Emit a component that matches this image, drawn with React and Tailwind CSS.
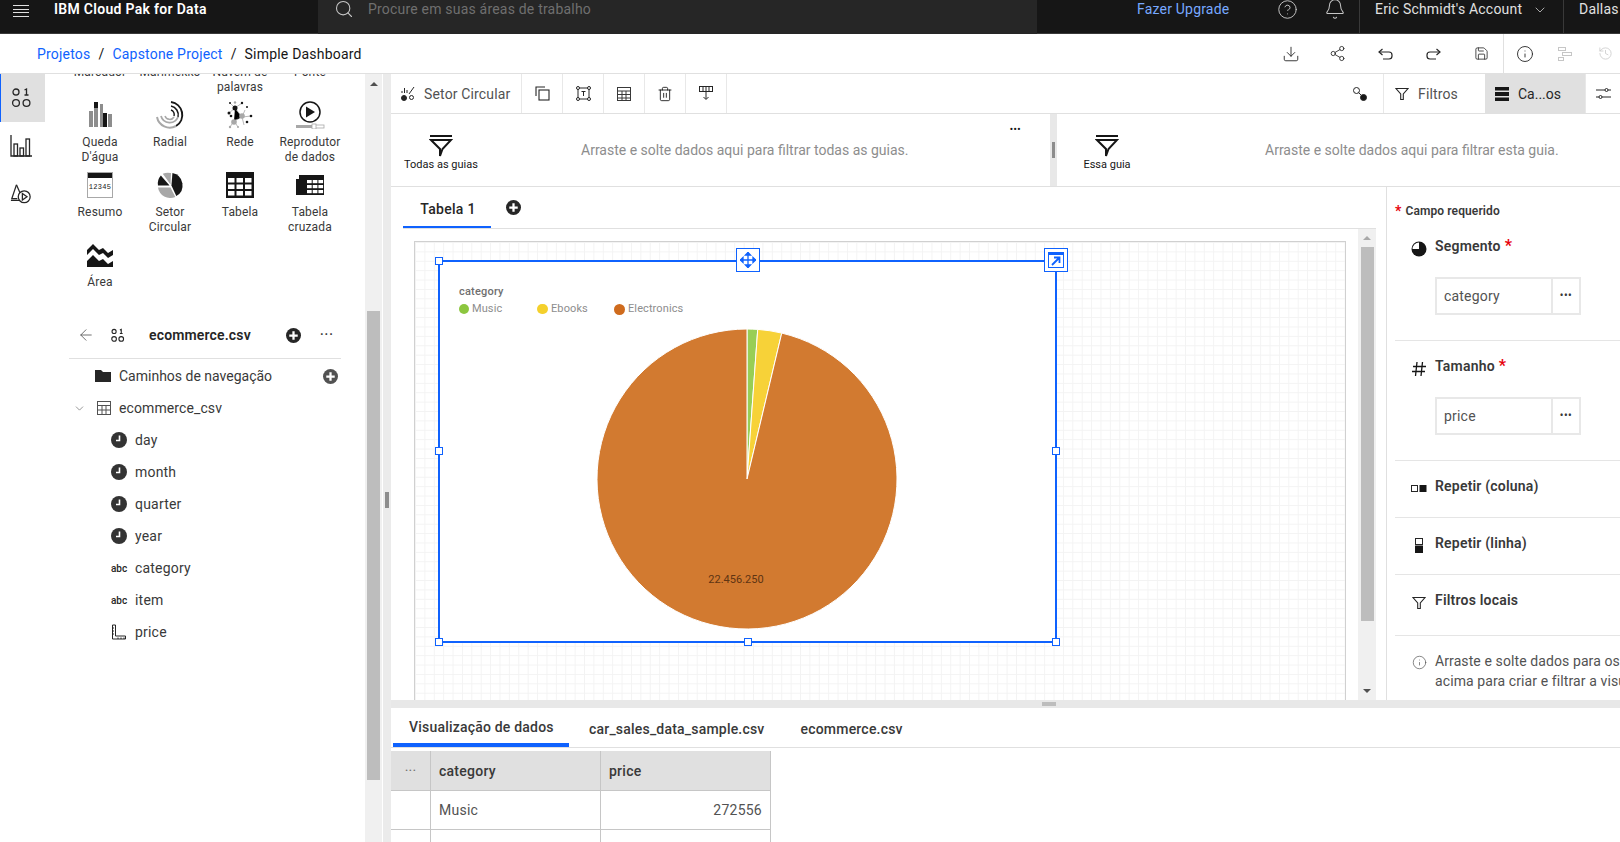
import React from "react";
import { Search, CircleHelp, Bell, ChevronDown, Download, Share2, Save, Info, History, ArrowLeft, Trash2 } from "lucide-react";

const Plus = ({ c = "#262626", s = 15 }) => (
  <svg width={s} height={s} viewBox="0 0 16 16"><circle cx="8" cy="8" r="8" fill={c} /><path d="M8 3.500v9M3.500 8h9" stroke="#fff" strokeWidth="2.400" /></svg>
);
const Clock = () => (
  <svg width="16" height="16" viewBox="0 0 16 16"><circle cx="8" cy="8" r="8" fill="#333" /><path d="M8.500 3.500v5h-3.500" fill="none" stroke="#fff" strokeWidth="1.600" /></svg>
);
const Grid01 = ({ s = 22, w = 1.3 }) => (
  <svg width={s} height={s} viewBox="0 0 22 22" fill="none" stroke="#262626" strokeWidth={w}>
    <circle cx="6" cy="5" r="3" /><circle cx="6" cy="16" r="3.400" /><circle cx="16.500" cy="16" r="3.400" /><path d="M14.500 3l2-1v6M14.500 8h4" />
  </svg>
);
const Funnel = () => (
  <svg width="24" height="24" viewBox="0 0 24 24"><path d="M1 2h22" stroke="#161616" strokeWidth="2" /><path d="M2 6h20l-8.500 9-2.500 7V15z" fill="none" stroke="#161616" strokeWidth="2" /></svg>
);
const SmallFunnel = () => (
  <svg width="14" height="14" viewBox="0 0 14 14"><path d="M1 1.500h12L8.300 7v5.500H5.700V7z" fill="none" stroke="#262626" strokeWidth="1.100" /></svg>
);
const Waterfall = () => (
  <svg width="24" height="26" viewBox="0 0 24 26">
    <rect x="1" y="9" width="4" height="16" fill="#8d8d8d" /><rect x="6" y="0" width="4" height="6" fill="#161616" /><rect x="6" y="6" width="4" height="19" fill="#8d8d8d" /><rect x="12" y="2" width="3" height="23" fill="#8d8d8d" /><rect x="15" y="11" width="4" height="14" fill="#161616" /><rect x="20" y="12" width="4" height="13" fill="#8d8d8d" />
  </svg>
);
const Radial = () => (
  <svg width="28" height="28" viewBox="0 0 28 28" fill="none">
    <path d="M15 1a13 13 0 0 1 5 24" stroke="#161616" strokeWidth="2" /><path d="M20 25a13 13 0 0 1-19-9" stroke="#a8a8a8" strokeWidth="2" /><path d="M15 5a9 9 0 0 1 7 11" stroke="#161616" strokeWidth="1.500" /><path d="M22 16a9 9 0 0 1-17-1" stroke="#a8a8a8" strokeWidth="1.800" /><path d="M15 9a5 5 0 0 1 3 6" stroke="#161616" strokeWidth="1.500" /><path d="M18 16a5 5 0 0 1-9-1" stroke="#a8a8a8" strokeWidth="1.500" />
  </svg>
);
const Network = () => (
  <svg width="26" height="28" viewBox="0 0 26 28">
    <g stroke="#a8a8a8" strokeWidth=".8"><path d="M8 7l7 9-8 4M8 7L3 2M8 7l7-5M15 16l9-1M15 16l3-7M15 16l2 8M7 20l-4 6M7 20l4 6M8 7L2 12" /></g>
    <g fill="#161616"><circle cx="8" cy="7" r="2.500" /><circle cx="2" cy="12" r="1.500" /><circle cx="15" cy="2" r="1.200" /><circle cx="4" cy="15" r="1.300" /><circle cx="20" cy="21" r="1.300" /><circle cx="24" cy="15" r="1.300" /><circle cx="11" cy="17" r="1" /><circle cx="3" cy="2" r="1" /><circle cx="20" cy="6" r="1" /></g>
    <g fill="#a8a8a8"><circle cx="15" cy="15" r="2.800" /><circle cx="7" cy="21" r="2.800" /><circle cx="8" cy="1.500" r="1.200" /><circle cx="3" cy="26" r="1.200" /><circle cx="11" cy="26" r="1" /></g>
  </svg>
);
const Player = () => (
  <svg width="30" height="28" viewBox="0 0 30 28" fill="none">
    <circle cx="15" cy="11" r="10" stroke="#161616" strokeWidth="1.500" /><path d="M11 5.500l9 5.500-9 5.500z" fill="#161616" />
    <rect x="1" y="24" width="18" height="3" fill="#a8a8a8" /><rect x="19" y="24" width="10" height="3" stroke="#a8a8a8" strokeWidth=".8" /><rect x="17" y="23" width="4" height="5" fill="#fff" stroke="#a8a8a8" strokeWidth=".8" />
  </svg>
);
const Summary = () => (
  <div className="w-[26px] h-[26px] bg-[#a8a8a8] p-px">
    <div className="h-[5px] bg-[#161616]" />
    <div className="h-[19px] bg-white flex items-center justify-center text-[7px] tracking-[.3px] text-[#161616] font-['Liberation_Mono',monospace]">12345</div>
  </div>
);
const PieIcon = () => (
  <svg width="27" height="27" viewBox="0 0 28 28">
    <path d="M16 1a13 13 0 0 1 4 24l-5-11z" fill="#161616" /><path d="M14 1h.500l-.500 12L6 1.800A13 13 0 0 1 14 1z" fill="#a8a8a8" /><path d="M4 3.500l9 10.500H1a13 13 0 0 1 3-10.500z" fill="#161616" /><path d="M1 16h13l5 10a13 13 0 0 1-18-10z" fill="#a8a8a8" />
  </svg>
);
const TableBig = () => (
  <svg width="28" height="26" viewBox="0 0 28 26">
    <rect width="28" height="26" fill="#161616" />
    {[0, 1, 2].map((r) => [0, 1, 2].map((c) => <rect key={r + "-" + c} x={2 + c * 8.500} y={6 + r * 6.500} width="6.500" height="4.500" fill="#fff" />))}
  </svg>
);
const Cross = () => (
  <svg width="28" height="20" viewBox="0 0 28 20">
    <path d="M3 0h25v20H0V4h3z" fill="#161616" />
    {[0, 1, 2].map((r) => [0, 1, 2].map((c) => <rect key={r + "-" + c} x={11 + c * 5.700} y={5 + r * 5} width="4.700" height="3.200" fill="#fff" />))}
  </svg>
);
const AreaIcon = () => (
  <svg width="26" height="24" viewBox="0 0 26 24">
    <path d="M0 7L6 1l6 6 4-2 5 5 5-3v5l-5 3-5-5-4 2-6-6-6 6z" fill="#161616" /><path d="M0 18l6-6 6 6 4-2 5 5 5-3v6H0z" fill="#161616" />
  </svg>
);
const Charts = () => (
  <svg width="22" height="22" viewBox="0 0 22 22" fill="none" stroke="#262626" strokeWidth="1.300"><path d="M1 0v21h21" /><rect x="4" y="9" width="3.500" height="12" /><rect x="10" y="13" width="3.500" height="8" /><rect x="16" y="4" width="3.500" height="17" /></svg>
);
const Shapes = () => (
  <svg width="22" height="22" viewBox="0 0 24 24" fill="none" stroke="#262626" strokeWidth="1.400"><path d="M1 19h10M7 2L2 17h6" /><path d="M7 2l4 9" /><circle cx="15.500" cy="15" r="6.500" /><path d="M13.500 11.500v7l5-3.500z" /></svg>
);
const Undo = ({ flip }) => (
  <svg width="15" height="12" viewBox="0 0 15 12" fill="none" stroke="#262626" strokeWidth="1.200" className={flip ? "-scale-x-100" : ""}><path d="M4.500 1L1 4l3.500 3" /><path d="M1 4h10a3 3 0 0 1 3 3v1a3 3 0 0 1-3 3H5" /></svg>
);
const Segment = () => (
  <svg width="16" height="16" viewBox="0 0 16 16"><circle cx="8" cy="8" r="7.500" fill="#161616" /><path d="M8 1.500A6.500 6.500 0 0 0 1.500 8H8z" fill="#fff" /></svg>
);

const Gallery = ({ icon, label }) => (
  <div className="w-[70px] h-[70px] flex flex-col items-center">
    <div className="h-[30px] flex items-center justify-center">{icon}</div>
    <div className="mt-[5px] text-[12px] leading-[15px] tracking-[.15px] text-center text-[#393939]">{label}</div>
  </div>
);

const gallery = [
  [null, <>Marcador</>],
  [null, <>Marimekko</>],
  [null, <>Nuvem de<br />palavras</>],
  [null, <>Ponte</>],
  [<Waterfall />, <>Queda<br />D'água</>],
  [<Radial />, <>Radial</>],
  [<Network />, <>Rede</>],
  [<Player />, <>Reprodutor<br />de dados</>],
  [<Summary />, <>Resumo</>],
  [<PieIcon />, <>Setor<br />Circular</>],
  [<TableBig />, <>Tabela</>],
  [<Cross />, <>Tabela<br />cruzada</>],
  [<AreaIcon />, <>Área</>],
];

const Field = ({ icon, label }) => (
  <div className="h-8 flex items-center pl-[66px]">
    <div className="w-4 h-4 flex items-center justify-center">{icon}</div>
    <span className="ml-2 text-sm tracking-[.2px] text-[#393939]">{label}</span>
  </div>
);
const Abc = () => <span className="text-[10px] font-medium text-[#262626]">abc</span>;
const Ruler = () => (
  <svg width="16" height="16" viewBox="0 0 16 16" fill="none" stroke="#262626"><path d="M1.500 1h3v11h10v3h-13z" /><path d="M1.500 4h1.500M1.500 7h1.500M1.500 10h1.500M7 15v-1.500M10 15v-1.500M13 15v-1.500" /></svg>
);

const Handle = ({ className }) => <div className={"absolute w-2 h-2 bg-white border border-[#0f62fe] " + className} />;

const Zone = ({ label, text, cls, textCls, children }) => (
  <div className={"h-full flex items-center relative " + cls}>
    <div className="w-[100px] shrink-0 flex flex-col items-center pt-[5px]">
      <Funnel />
      <div className="text-[11px] leading-[14px] text-[#161616]">{label}</div>
    </div>
    <div className={"text-sm text-[#8d8d8d] " + textCls}>{text}</div>
    {children}
  </div>
);

const Tool = ({ children }) => <div className="w-[41px] h-full border-r border-[#e8e8e8] flex items-center justify-center">{children}</div>;

const Sec = ({ icon, title, star, children, h }) => (
  <div className={"border-b border-[#e5e5e5] pt-[15px] " + h}>
    <div className="h-5 flex items-center">
      <div className="w-[40px] shrink-0 flex justify-center pl-[8px] pt-[5px] text-[#161616]">{icon}</div>
      <span className="text-sm font-semibold tracking-[.2px] text-[#393939]">{title}</span>
      {star && <span className="ml-1 text-red-600 font-bold text-base leading-none">*</span>}
    </div>
    {children}
  </div>
);
const FieldBox = ({ text }) => (
  <div className="ml-[40px] mt-[21px] w-[146px] h-[38px] border-2 border-[#e8e8e8] flex items-center text-sm tracking-[.2px] text-[#525252]">
    <div className="flex-1 pl-[7px]">{text}</div>
    <div className="w-[28px] h-full border-l-2 border-[#e8e8e8] flex items-center justify-center text-[#393939] font-bold text-[10px] tracking-[.5px]">•••</div>
  </div>
);

function Pie() {
  const R = 150;
  const pt = (a) => {
    const r = (a * Math.PI) / 180;
    return [150 + R * Math.sin(r), 150 - R * Math.cos(r)];
  };
  const [x1, y1] = pt(4.1);
  const [x2, y2] = pt(13.4);
  return (
    <svg width="300" height="300" viewBox="0 0 300 300" className="block ml-[157px] mt-[12px]">
      <path d={`M150 150L150 0A150 150 0 0 1 ${x1} ${y1}Z`} fill="#98ce55" stroke="#fff" />
      <path d={`M150 150L${x1} ${y1}A150 150 0 0 1 ${x2} ${y2}Z`} fill="#f7d238" stroke="#fff" />
      <path d={`M150 150L${x2} ${y2}A150 150 0 1 1 150 0Z`} fill="#d27a30" stroke="#fff" />
      <text x="139" y="254" textAnchor="middle" fontSize="11" fill="#5e3413">22.456.250</text>
    </svg>
  );
}

export default function App() {
  return (
    <div className="w-[1620px] h-[842px] overflow-hidden flex flex-col bg-white font-['Roboto',sans-serif]">
      {/* Top bar */}
      <div className="h-[34px] shrink-0 bg-[#161616] border-b border-[#393939] flex text-[#e0e0e0] text-sm tracking-[.2px]">
        <div className="w-[54px] pl-[13px] pt-[5px]">
          <div className="w-4 flex flex-col gap-[2.500px]">
            {[0, 1, 2, 3].map((i) => <div key={i} className="h-px bg-[#e0e0e0]" />)}
          </div>
        </div>
        <div className="w-[264px] font-semibold text-white leading-[19px] tracking-[.3px]">IBM Cloud Pak for Data</div>
        <div className="w-[719px] h-[34px] bg-[#262626] flex pl-[16px] text-[#6f6f6f] leading-[19px]">
          <Search size={20} strokeWidth={1.3} className="text-[#c6c6c6] -mt-[1px]" />
          <span className="ml-[14px]">Procure em suas áreas de trabalho</span>
        </div>
        <div className="w-[100px]" />
        <div className="w-[140px] text-[#78a9ff] leading-[19px]">Fazer Upgrade</div>
        <CircleHelp size={21} strokeWidth={1.1} className="text-[#c6c6c6] -mt-[1px]" />
        <Bell size={22} strokeWidth={1.1} className="text-[#c6c6c6] ml-[26px] -mt-[2px]" />
        <div className="ml-[13px] w-[205px] border-l border-r border-[#393939] h-full flex pl-[15px] leading-[19px]">
          <span>Eric Schmidt's Account</span>
          <ChevronDown size={16} strokeWidth={1.1} className="ml-[10px] mt-[2px]" />
        </div>
        <div className="pl-[15px] leading-[19px]">Dallas</div>
      </div>
      {/* Breadcrumb */}
      <div className="h-[40px] shrink-0 border-b border-[#e0e0e0] flex items-center text-sm tracking-[.2px] pl-[37px] text-[#161616]">
        <a className="text-[#0f62fe]">Projetos</a><span className="mx-[8px]">/</span>
        <a className="text-[#0f62fe]">Capstone Project</a><span className="mx-[8px]">/</span>
        <span>Simple Dashboard</span>
        <div className="ml-auto flex items-center h-full text-[#262626]">
          <Download size={18} strokeWidth={1.2} />
          <Share2 size={17} strokeWidth={1.2} className="ml-[29px]" />
          <div className="ml-[32px]"><Undo /></div>
          <div className="ml-[33px]"><Undo flip /></div>
          <Save size={15} strokeWidth={1.3} className="ml-[33px]" />
          <div className="ml-[14px] w-px h-full bg-[#e0e0e0]" />
          <Info size={18} strokeWidth={1.2} className="ml-[12px]" />
          <svg width="15" height="14" viewBox="0 0 15 14" fill="none" stroke="#c6c6c6" className="ml-[24px]"><rect x=".5" y=".5" width="7" height="3" /><rect x="4.500" y="5.500" width="9" height="3" /><rect x=".5" y="10.500" width="5" height="3" /></svg>
          <History size={15} strokeWidth={1.2} className="ml-[25px] mr-[7px] text-[#c6c6c6]" />
        </div>
      </div>
      {/* Body */}
      <div className="flex-1 flex min-h-0">
        {/* Rail */}
        <div className="w-[45px] shrink-0">
          <div className="h-[48px] bg-[#e0e0e0] border-l border-[#0f62fe] flex items-center justify-center pr-[5px]"><Grid01 /></div>
          <div className="h-[48px] flex items-center justify-center pr-[3px]"><Charts /></div>
          <div className="h-[48px] flex items-center justify-center pr-[3px]"><Shapes /></div>
        </div>
        {/* Left panel */}
        <div className="w-[320px] shrink-0 overflow-hidden">
          <div className="ml-[20px] -mt-[44px] grid grid-cols-[repeat(4,70px)]">
            {gallery.map(([ic, l], i) => <Gallery key={i} icon={ic} label={l} />)}
          </div>
          <div className="ml-[24px] w-[272px] mt-[3px] h-[46px] border-b border-[#e0e0e0] flex items-center pb-[1px]">
            <ArrowLeft size={18} strokeWidth={1.1} className="ml-[8px] text-[#525252]" />
            <div className="ml-[15px]"><Grid01 s={15} w={1.6} /></div>
            <span className="ml-[24px] w-[137px] text-sm font-semibold tracking-[.15px] text-[#262626]">ecommerce.csv</span>
            <Plus />
            <span className="ml-[19px] tracking-[1px] text-[#393939] font-bold text-[12px] leading-none">···</span>
          </div>
          <div className="h-8 flex items-center mt-px pl-[50px] relative">
            <svg width="16" height="12" viewBox="0 0 16 12"><path d="M0 0h6l2 2h8v10H0z" fill="#262626" /></svg>
            <span className="ml-2 text-sm text-[#393939]">Caminhos de navegação</span>
            <div className="ml-auto mr-[27px]"><Plus c="#525252" /></div>
          </div>
          <div className="h-8 flex items-center pl-[28px]">
            <ChevronDown size={13} strokeWidth={1.1} className="text-[#525252]" />
            <svg width="14" height="14" viewBox="0 0 14 14" fill="none" stroke="#525252" className="ml-[11px]"><rect x=".5" y=".5" width="13" height="13" /><path d="M.5 4.500h13M.5 9h13M5 4.500v9M9 4.500v9" /></svg>
            <span className="ml-[8px] text-sm tracking-[.1px] text-[#393939]">ecommerce_csv</span>
          </div>
          <Field icon={<Clock />} label="day" />
          <Field icon={<Clock />} label="month" />
          <Field icon={<Clock />} label="quarter" />
          <Field icon={<Clock />} label="year" />
          <Field icon={<Abc />} label="category" />
          <Field icon={<Abc />} label="item" />
          <Field icon={<Ruler />} label="price" />
        </div>
        {/* Left scrollbar */}
        <div className="w-[17px] shrink-0 bg-[#f0f0f0] flex flex-col items-center">
          <div className="h-[237px] w-full flex justify-center pt-[8px]">
            <div className="w-0 h-0 border-x-[4px] border-x-transparent border-b-[4px] border-b-[#505050]" />
          </div>
          <div className="w-[13px] flex-1 bg-[#bdbdbd] mb-[62px]" />
        </div>
        {/* Splitter */}
        <div className="w-[9px] shrink-0 border-l border-white bg-[#ebebeb] flex items-center justify-center pt-[84px]">
          <div className="w-1 h-4 bg-[#8d8d8d]" />
        </div>
        {/* Main */}
        <div className="flex-1 min-w-0 flex flex-col">
          {/* Toolbar */}
          <div className="h-[40px] shrink-0 border-b border-[#e0e0e0] flex items-center">
            <div className="w-[131px] h-full border-r border-[#e8e8e8] flex items-center pl-[10px] text-sm tracking-[.15px] text-[#525252]">
              <svg width="14" height="16" viewBox="0 0 14 16" fill="none" stroke="#262626"><path d="M1 7V5M3.500 7V2M6 7V4M13 1L8 8" /><circle cx="3" cy="12" r="2.500" fill="#262626" /><circle cx="10.500" cy="11.500" r="2" /></svg>
              <span className="ml-[9px]">Setor Circular</span>
            </div>
            <Tool>
              <svg width="15" height="15" viewBox="0 0 15 15" fill="none" stroke="#262626" strokeWidth="1.100"><path d="M1 10V1h9" /><rect x="4" y="4" width="10" height="10" /></svg>
            </Tool>
            <Tool>
              <svg width="15" height="15" viewBox="0 0 15 15" fill="none" stroke="#262626"><rect x="2" y="2" width="11" height="11" /><circle cx="2" cy="2" r="1.500" fill="#fff" /><circle cx="13" cy="2" r="1.500" fill="#fff" /><circle cx="2" cy="13" r="1.500" fill="#fff" /><circle cx="13" cy="13" r="1.500" fill="#fff" /><path d="M5.500 5.500h4M7.500 5.500v4.500" /></svg>
            </Tool>
            <Tool>
              <svg width="14" height="14" viewBox="0 0 14 14" fill="none" stroke="#393939"><rect x=".5" y=".5" width="13" height="13" /><path d="M.5 4h13M.5 7.500h13M.5 11h13M5 4v9.500M9 4v9.500" /></svg>
            </Tool>
            <Tool><Trash2 size={16} strokeWidth={1.2} /></Tool>
            <Tool>
              <svg width="14" height="15" viewBox="0 0 14 15" fill="none" stroke="#262626"><rect x=".5" y=".5" width="13" height="5" /><path d="M4 .5v5M7 .5v5M10 .5v5M7 5.500V13M4.500 11L7 13.500 9.500 11" /></svg>
            </Tool>
            <div className="ml-auto h-full flex items-center">
              <svg width="16" height="16" viewBox="0 0 16 16" fill="none" stroke="#262626" className="mr-[15px]"><circle cx="4.500" cy="4.500" r="3" /><path d="M6.500 6.500l3 3" /><circle cx="11.500" cy="11.500" r="3" fill="#161616" /></svg>
              <div className="w-[102px] h-full border-l border-[#e8e8e8] flex items-center pl-[11px] text-sm tracking-[.15px] text-[#525252]">
                <SmallFunnel /><span className="ml-[9px]">Filtros</span>
              </div>
              <div className="w-[100px] h-full bg-[#e0e0e0] flex items-center pl-[10px] text-sm text-[#262626]">
                <svg width="14" height="14" viewBox="0 0 14 14"><rect width="14" height="3.500" fill="#161616" /><rect y="5" width="14" height="4" fill="#161616" /><rect y="10.500" width="14" height="3.500" fill="#161616" /></svg>
                <span className="ml-[9px]">Ca...os</span>
              </div>
              <div className="w-[35px] h-full border-l border-[#e8e8e8] flex items-center justify-center">
                <svg width="15" height="13" viewBox="0 0 15 13" fill="none" stroke="#262626"><path d="M0 3h9M12 3h3M0 10h3M6 10h9" /><circle cx="10.500" cy="3" r="1.500" /><circle cx="4.500" cy="10" r="1.500" /></svg>
              </div>
            </div>
          </div>
          {/* Filter zones */}
          <div className="h-[73px] shrink-0 border-b border-[#e0e0e0] flex">
            <Zone cls="w-[659px]" textCls="ml-[90px]" label="Todas as guias" text="Arraste e solte dados aqui para filtrar todas as guias.">
              <span className="absolute right-[29px] top-[10px] text-[9px] leading-[10px] tracking-[.5px] text-[#161616] font-bold">•••</span>
            </Zone>
            <div className="w-[7px] bg-[#e8e8e8] flex items-center justify-center relative">
              <div className="w-[3px] h-4 bg-[#8d8d8d]" />
            </div>
            <Zone cls="flex-1" textCls="ml-[108px]" label="Essa guia" text="Arraste e solte dados aqui para filtrar esta guia." />
          </div>
          {/* Middle */}
          <div className="flex-1 min-h-0 flex">
            <div className="w-[985px] shrink-0 flex flex-col min-h-0">
              <div className="h-[42px] shrink-0 ml-[12px] border-b border-[#e0e0e0] flex">
                <div className="w-[88px] h-[41px] border-b-2 border-[#0f62fe] flex items-center justify-center text-sm font-medium tracking-[.3px] text-[#262626] pt-[5px] pl-[2px]">Tabela 1</div>
                <div className="ml-[15px] pt-[13px]"><Plus /></div>
              </div>
              <div className="flex-1 min-h-0 flex">
                <div className="w-[967px] pl-[23px] pt-[12px] pr-[12px] min-h-0">
                  <div className="relative h-full border-t border-x border-[#d0d0d0] bg-[linear-gradient(#f3f3f3_1px,transparent_1px),linear-gradient(90deg,#f3f3f3_1px,transparent_1px)] bg-[length:9.400px_9.400px]">
                    <div className="absolute left-[23px] top-[18px] w-[619px] h-[383px] border-2 border-[#0f62fe] bg-white">
                      <div className="pl-[19px] pt-[22px] text-[11px] text-[#8d8d8d]">
                        <div className="leading-[16px] font-medium text-[#6f6f6f] tracking-[.2px]">category</div>
                        <div className="flex h-[17px] pt-[1px] items-center text-[11px] tracking-[.1px]">
                          <div className="w-[78px] flex items-center"><div className="w-[10px] h-[10px] rounded-full bg-[#8cc63f] mr-[3px]" />Music</div>
                          <div className="w-[77px] flex items-center"><div className="w-[11px] h-[10px] rounded-full bg-[#f4d02c] mr-[3px]" />Ebooks</div>
                          <div className="flex items-center"><div className="w-[11px] h-[11px] rounded-full bg-[#cf6b1d] mr-[3px]" />Electronics</div>
                        </div>
                      </div>
                      <Pie />
                      <Handle className="-left-[5px] top-[-5px]" />
                      <Handle className="-left-[5px] top-[185px]" />
                      <Handle className="-right-[5px] top-[185px]" />
                      <Handle className="-left-[5px] -bottom-[5px]" />
                      <Handle className="left-[304px] -bottom-[5px]" />
                      <Handle className="-right-[5px] -bottom-[5px]" />
                      <div className="absolute left-[296px] -top-[14px] w-6 h-6 bg-white border border-[#0f62fe] flex items-center justify-center">
                        <svg width="16" height="16" viewBox="0 0 16 16" fill="none" stroke="#0f62fe" strokeWidth="1.300"><path d="M8 0v16M0 8h16" /><path d="M5.500 3L8 .5 10.500 3zM5.500 13L8 15.500 10.500 13zM3 5.500L.5 8 3 10.500zM13 5.500L15.500 8 13 10.500z" fill="#0f62fe" /></svg>
                      </div>
                      <div className="absolute -right-[13px] -top-[14px] w-6 h-6 bg-white border border-[#0f62fe] flex items-center justify-center">
                        <svg width="16" height="16" viewBox="0 0 16 16" fill="none"><rect x=".5" y=".5" width="15" height="15" stroke="#0f62fe" /><rect width="16" height="3" fill="#0f62fe" /><path d="M4 13l7-7M6 5.500h5.500V11" stroke="#0f62fe" strokeWidth="1.800" /></svg>
                      </div>
                    </div>
                  </div>
                </div>
                <div className="w-[18px] bg-[#f0f0f0] flex flex-col items-center">
                  <div className="h-[18px] flex justify-center pt-[7px]"><div className="w-0 h-0 border-x-[4px] border-x-transparent border-b-[4px] border-b-[#a8a8a8]" /></div>
                  <div className="w-[13px] h-[374px] bg-[#bdbdbd]" />
                  <div className="flex-1 flex items-end pb-[7px]"><div className="w-0 h-0 border-x-[4px] border-x-transparent border-t-[4px] border-t-[#505050]" /></div>
                </div>
              </div>
            </div>
            {/* Right panel */}
            <div className="ml-[10px] flex-1 min-w-0 overflow-hidden border-l border-[#e0e0e0] pl-[8px]">
              <div className="h-[34px] pt-[16px] flex items-start text-xs font-semibold tracking-[.1px] text-[#393939] leading-[16px]">
                <span className="text-red-600 font-bold text-sm leading-[16px] mr-1">*</span>Campo requerido
              </div>
              <Sec h="h-[120px]" icon={<Segment />} title="Segmento" star><FieldBox text="category" /></Sec>
              <Sec h="h-[120px]" icon={<svg width="14" height="16" viewBox="0 0 14 16" stroke="#161616" strokeWidth="1.300" fill="none"><path d="M5 1L3.500 15M10.500 1L9 15M1 5.500h13M0 10.500h13" /></svg>} title="Tamanho" star><FieldBox text="price" /></Sec>
              <Sec h="h-[57px]" icon={<svg width="16" height="7" viewBox="0 0 16 7"><rect x=".5" y=".5" width="6" height="6" fill="none" stroke="#262626" /><rect x="8.500" width="7" height="7" fill="#161616" /></svg>} title="Repetir (coluna)" />
              <Sec h="h-[57px]" icon={<svg width="8" height="15" viewBox="0 0 8 15"><rect x=".5" y=".5" width="7" height="6" fill="none" stroke="#262626" /><rect y="7.500" width="8" height="7.500" fill="#161616" /></svg>} title="Repetir (linha)" />
              <Sec h="h-[61px]" icon={<SmallFunnel />} title="Filtros locais" />
              <div className="pt-[15px] flex text-sm tracking-[.1px] text-[#525252] leading-[20px] whitespace-nowrap">
                <div className="w-[40px] shrink-0 flex justify-center pl-[8px] pt-[4px]"><Info size={15} strokeWidth={1.1} /></div>
                <div>Arraste e solte dados para os campos<br />acima para criar e filtrar a visualização.</div>
              </div>
            </div>
          </div>
          {/* Splitter */}
          <div className="h-[8px] shrink-0 bg-[#e8e8e8] flex items-center justify-center pl-[86px]"><div className="w-[14px] h-1 bg-[#bdbdbd]" /></div>
          {/* Bottom */}
          <div className="h-[134px] shrink-0">
            <div className="h-[40px] border-b border-[#e0e0e0] flex text-sm font-medium tracking-[.2px] text-[#393939]">
              <div className="ml-[2px] w-[176px] h-[39px] border-b-4 border-[#0f62fe] flex items-center pl-[16px] pt-[3px]">Visualização de dados</div>
              <div className="ml-[20px] h-[39px] flex items-center pt-[2px]">car_sales_data_sample.csv</div>
              <div className="ml-[36px] h-[39px] flex items-center pt-[2px]">ecommerce.csv</div>
            </div>
            <div className="mt-[3px] w-[380px] grid grid-cols-[40px_170px_170px] text-sm tracking-[.25px] text-[#525252]">
              <div className="h-[40px] bg-[#e0e0e0] border-r border-b border-[#c6c6c6] flex items-center justify-center text-[#6f6f6f]">···</div>
              <div className="h-[40px] bg-[#e0e0e0] border-r border-b border-[#c6c6c6] flex items-center pl-2 font-medium text-[#393939]">category</div>
              <div className="h-[40px] bg-[#e0e0e0] border-r border-b border-[#c6c6c6] flex items-center pl-2 font-medium text-[#393939]">price</div>
              <div className="h-[39px] border-r border-b border-[#c6c6c6]" />
              <div className="h-[39px] border-r border-b border-[#c6c6c6] flex items-center pl-2">Music</div>
              <div className="h-[39px] border-r border-b border-[#c6c6c6] flex items-center justify-end pr-2">272556</div>
              <div className="h-[39px] border-r border-[#c6c6c6]" />
              <div className="h-[39px] border-r border-[#c6c6c6]" />
              <div className="h-[39px] border-r border-[#c6c6c6]" />
            </div>
          </div>
        </div>
      </div>
    </div>
  );
}
